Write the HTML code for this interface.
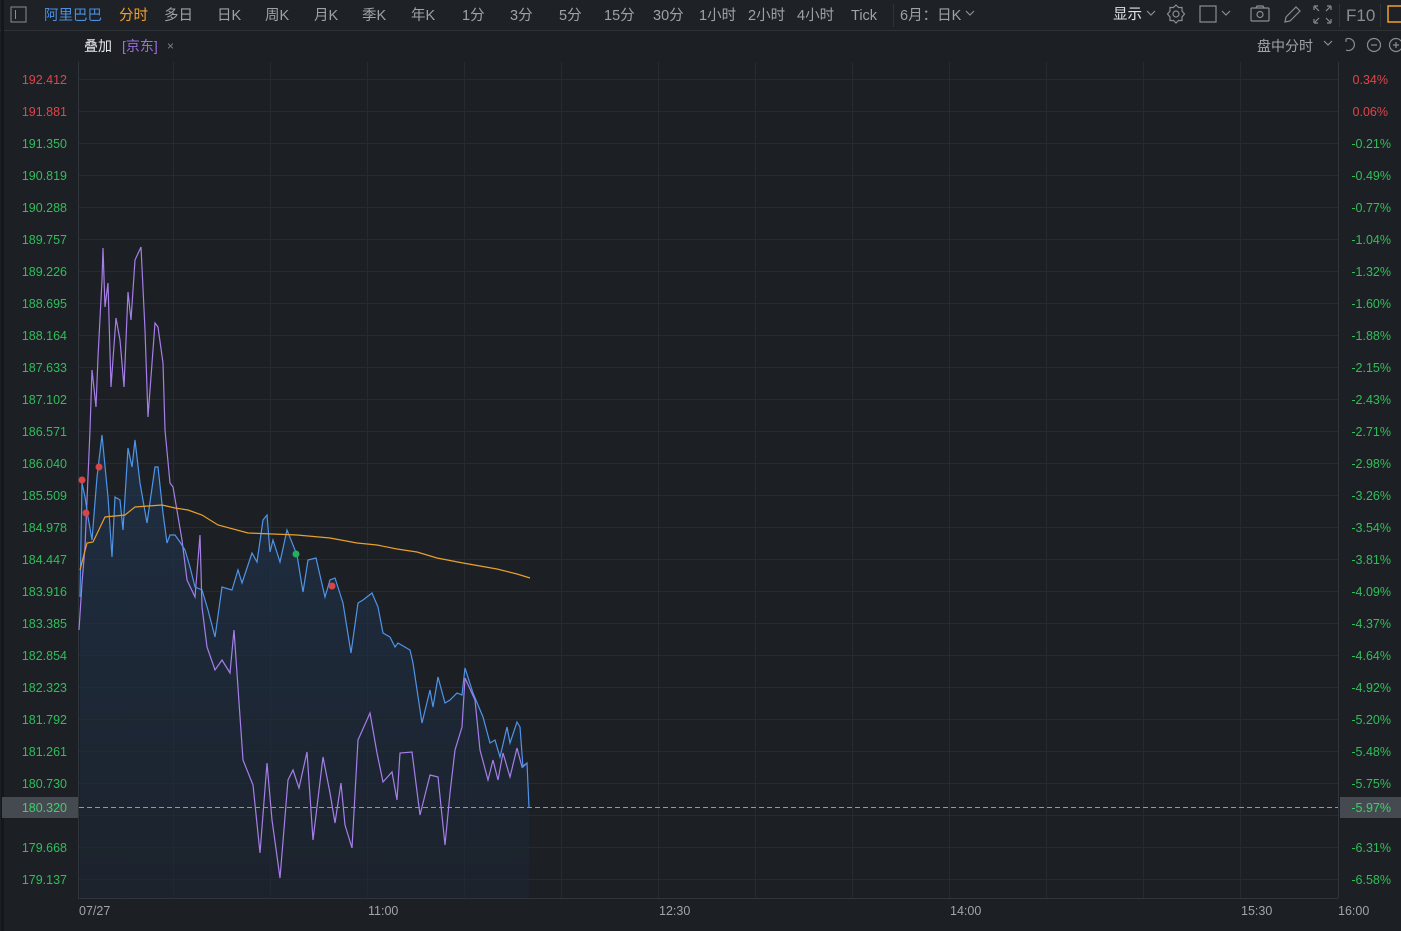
<!DOCTYPE html>
<html><head><meta charset="utf-8"><style>
*{margin:0;padding:0;box-sizing:border-box}
body{width:1401px;height:931px;background:#1c1f23;overflow:hidden;font-family:"Liberation Sans","Noto Sans CJK SC",sans-serif;position:relative}
</style></head><body>
<svg width="1401" height="931" style="position:absolute;left:0;top:0" font-family="Liberation Sans, Noto Sans CJK SC, sans-serif">
<defs><linearGradient id="g" x1="0" y1="0" x2="0" y2="1"><stop offset="0" stop-color="#1f3550" stop-opacity="0.7"/><stop offset="1" stop-color="#1c2533" stop-opacity="0.6"/></linearGradient></defs>
<rect x="0" y="0" width="1401" height="30" fill="#1e2125"/>
<line x1="0" y1="30.5" x2="1401" y2="30.5" stroke="#2f3338"/>
<line x1="2.5" y1="0" x2="2.5" y2="931" stroke="#15171a" stroke-width="3"/>
<g stroke="#262b31" stroke-width="1">
<path d="M79 79.5H1338M79 111.5H1338M79 143.5H1338M79 175.5H1338M79 207.5H1338M79 239.5H1338M79 271.5H1338M79 303.5H1338M79 335.5H1338M79 367.5H1338M79 399.5H1338M79 431.5H1338M79 463.5H1338M79 495.5H1338M79 527.5H1338M79 559.5H1338M79 591.5H1338M79 623.5H1338M79 655.5H1338M79 687.5H1338M79 719.5H1338M79 751.5H1338M79 783.5H1338M79 815.5H1338M79 847.5H1338M79 879.5H1338"/>
<path d="M173.5 62V898M270.5 62V898M367.5 62V898M464.5 62V898M561.5 62V898M658.5 62V898M755.5 62V898M852.5 62V898M949.5 62V898M1046.5 62V898M1143.5 62V898M1240.5 62V898"/>
</g>
<g stroke="#30353b"><path d="M78.5 62V898M1338.5 62V898M78 898.5H1338"/></g>
<path fill="url(#g)" d="M80 597L82 483L85 497L88 517L92 540L97 477L102 435L107 487L108 497L112 557L115 497L120 500L123 530L128 448L132 467L135 440L140 483L147 523L155 467L158 467L163 513L167 543L170 535L175 535L180 542L185 550L190 567L195 587L202 590L208 610L215 637L222 587L232 590L238 570L242 583L252 553L257 562L263 520L267 515L270 552L273 540L280 562L287 530L297 555L303 592L308 560L316 558L325 597L330 580L335 578L343 603L351 653L358 603L363 600L372 593L378 607L383 633L390 637L395 647L398 643L410 650L413 663L422 723L430 690L433 707L438 677L445 703L450 700L457 693L462 695L465 668L473 693L483 717L490 743L495 740L500 757L507 727L510 743L517 722L520 727L523 767L527 763L529 807L529 898L80 898Z"/>
<polyline fill="none" stroke="#a57ee8" stroke-width="1.2" points="79,630 82,583 85,547 90,430 92,370 96,407 98,357 102,280 103,248 105,307 108,283 111,387 116,318 120,340 124,387 128,292 131,320 135,260 141,247 145,330 148,417 155,323 158,327 163,363 165,430 170,483 173,487 182,540 187,580 195,597 200,535 202,607 207,647 215,670 222,660 230,673 234,630 243,760 253,785 260,853 267,763 272,820 280,878 288,780 293,770 299,788 307,752 313,840 323,757 330,793 335,823 341,783 345,825 352,848 358,740 370,713 377,753 383,782 392,772 397,800 400,753 412,752 420,815 430,775 438,777 445,845 450,793 455,750 462,727 465,678 475,700 480,750 488,780 493,760 498,780 503,753 510,777 517,748 522,767 527,763"/>
<polyline fill="none" stroke="#4f94e8" stroke-width="1.2" points="80,597 82,483 85,497 88,517 92,540 97,477 102,435 107,487 108,497 112,557 115,497 120,500 123,530 128,448 132,467 135,440 140,483 147,523 155,467 158,467 163,513 167,543 170,535 175,535 180,542 185,550 190,567 195,587 202,590 208,610 215,637 222,587 232,590 238,570 242,583 252,553 257,562 263,520 267,515 270,552 273,540 280,562 287,530 297,555 303,592 308,560 316,558 325,597 330,580 335,578 343,603 351,653 358,603 363,600 372,593 378,607 383,633 390,637 395,647 398,643 410,650 413,663 422,723 430,690 433,707 438,677 445,703 450,700 457,693 462,695 465,668 473,693 483,717 490,743 495,740 500,757 507,727 510,743 517,722 520,727 523,767 527,763 529,807"/>
<polyline fill="none" stroke="#e8a02a" stroke-width="1.2" points="80,570 87,543 93,542 105,517 125,515 135,507 162,505 175,508 188,510 202,515 218,525 248,533 297,535 330,538 357,543 377,545 397,549 417,552 437,558 463,563 497,569 517,574 530,578"/>
<circle cx="82" cy="480" r="3.5" fill="#d84545"/><circle cx="86" cy="513" r="3.5" fill="#d84545"/><circle cx="99" cy="467" r="3.5" fill="#d84545"/><circle cx="332" cy="586" r="3.5" fill="#d84545"/><circle cx="296" cy="554" r="3.5" fill="#22b05a"/>
<line x1="79" y1="807.5" x2="1338" y2="807.5" stroke="#d08850" stroke-width="1" stroke-dasharray="5,3"/>
<rect x="2" y="797" width="76" height="21" fill="#454a51"/>
<rect x="1340" y="797" width="61" height="21" fill="#454a51"/>
<g font-size="12.5" text-anchor="end">
<text x="67" y="84" fill="#e0454a">192.412</text><text x="67" y="116" fill="#e0454a">191.881</text>
<g fill="#2fbf5a"><text x="67" y="148">191.350</text><text x="67" y="180">190.819</text><text x="67" y="212">190.288</text><text x="67" y="244">189.757</text><text x="67" y="276">189.226</text><text x="67" y="308">188.695</text><text x="67" y="340">188.164</text><text x="67" y="372">187.633</text><text x="67" y="404">187.102</text><text x="67" y="436">186.571</text><text x="67" y="468">186.040</text><text x="67" y="500">185.509</text><text x="67" y="532">184.978</text><text x="67" y="564">184.447</text><text x="67" y="596">183.916</text><text x="67" y="628">183.385</text><text x="67" y="660">182.854</text><text x="67" y="692">182.323</text><text x="67" y="724">181.792</text><text x="67" y="756">181.261</text><text x="67" y="788">180.730</text><text x="67" y="812" fill="#3fcf6a">180.320</text><text x="67" y="852">179.668</text><text x="67" y="884">179.137</text></g>
</g>
<g font-size="12.5" text-anchor="end">
<text x="1388" y="84" fill="#e0454a">0.34%</text><text x="1388" y="116" fill="#e0454a">0.06%</text>
<g fill="#2fbf5a"><text x="1391" y="148">-0.21%</text><text x="1391" y="180">-0.49%</text><text x="1391" y="212">-0.77%</text><text x="1391" y="244">-1.04%</text><text x="1391" y="276">-1.32%</text><text x="1391" y="308">-1.60%</text><text x="1391" y="340">-1.88%</text><text x="1391" y="372">-2.15%</text><text x="1391" y="404">-2.43%</text><text x="1391" y="436">-2.71%</text><text x="1391" y="468">-2.98%</text><text x="1391" y="500">-3.26%</text><text x="1391" y="532">-3.54%</text><text x="1391" y="564">-3.81%</text><text x="1391" y="596">-4.09%</text><text x="1391" y="628">-4.37%</text><text x="1391" y="660">-4.64%</text><text x="1391" y="692">-4.92%</text><text x="1391" y="724">-5.20%</text><text x="1391" y="756">-5.48%</text><text x="1391" y="788">-5.75%</text><text x="1391" y="812" fill="#3fcf6a">-5.97%</text><text x="1391" y="852">-6.31%</text><text x="1391" y="884">-6.58%</text></g>
</g>
<g font-size="12.5" fill="#a0a4aa"><text x="79" y="915">07/27</text><text x="368" y="915">11:00</text><text x="659" y="915">12:30</text><text x="950" y="915">14:00</text><text x="1241" y="915">15:30</text><text x="1338" y="915">16:00</text></g>
<rect x="11" y="7" width="15" height="15" fill="none" stroke="#8a8e94"/><line x1="15.5" y1="10" x2="15.5" y2="19" stroke="#8a8e94"/>
<g font-size="14.5" fill="#9ea2a8">
<text x="44" y="20" fill="#4a8fe0">阿里巴巴</text><text x="119" y="20" fill="#f0a030">分时</text>
<text x="164" y="20">多日</text><text x="217" y="20">日K</text><text x="265" y="20">周K</text><text x="314" y="20">月K</text><text x="362" y="20">季K</text><text x="411" y="20">年K</text><text x="462" y="20">1分</text><text x="510" y="20">3分</text><text x="559" y="20">5分</text><text x="604" y="20">15分</text><text x="653" y="20">30分</text><text x="699" y="20">1小时</text><text x="748" y="20">2小时</text><text x="797" y="20">4小时</text><text x="851" y="20">Tick</text>
<text x="900" y="20">6月：日K</text>
<text x="1113" y="19" fill="#e0e2e4">显示</text>
<text x="1346" y="21" font-size="17" fill="#8a8e94">F10</text>
</g>
<line x1="893.5" y1="4" x2="893.5" y2="27" stroke="#2f3338"/>
<line x1="1339.5" y1="4" x2="1339.5" y2="27" stroke="#2f3338"/><line x1="1380.5" y1="4" x2="1380.5" y2="27" stroke="#2f3338"/>
<g fill="none" stroke="#8a8e94" stroke-width="1.2">
<path d="M966 11l4 4 4-4M1147 11l4 4 4-4M1222 11l4 4 4-4M1324 41l4 4 4-4"/>
<circle cx="1176" cy="14" r="3"/><path d="M1176 5l2.5 2.5h3.5v3.5l2.5 3-2.5 3v3.5h-3.5l-2.5 2.5-2.5-2.5h-3.5v-3.5l-2.5-3 2.5-3v-3.5h3.5z"/>
<rect x="1200" y="6" width="16" height="16"/>
<rect x="1251" y="8" width="18" height="13" rx="1"/><circle cx="1260" cy="14.5" r="3"/><path d="M1256 8l1-2h6l1 2"/>
<path d="M1285 22l1-5 10-10 4 4-10 10z"/>
<path d="M1314 6v4M1314 6h4M1331 6h-4M1331 6v4M1314 23v-4M1314 23h4M1331 23h-4M1331 23v-4M1315 7l4 4M1330 7l-4 4M1315 22l4-4M1330 22l-4-4"/>
<path d="M1346 39a6 6 0 1 1 0 11M1346 39l0 3"/>
<circle cx="1374" cy="45" r="6.5"/><path d="M1371 45h6"/>
<circle cx="1396" cy="45" r="6.5"/><path d="M1393 45h6M1396 42v6"/>
</g>
<rect x="1388" y="6" width="16" height="16" fill="none" stroke="#f0a030" stroke-width="1.5"/>
<text x="84" y="51" font-size="14" fill="#e8eaec">叠加</text>
<text x="122" y="51" font-size="14" fill="#9a6fe0">[京东]</text>
<text x="167" y="50" font-size="12" fill="#80848a">×</text>
<text x="1257" y="51" font-size="14" fill="#a0a4aa">盘中分时</text>
</svg>
</body></html>
